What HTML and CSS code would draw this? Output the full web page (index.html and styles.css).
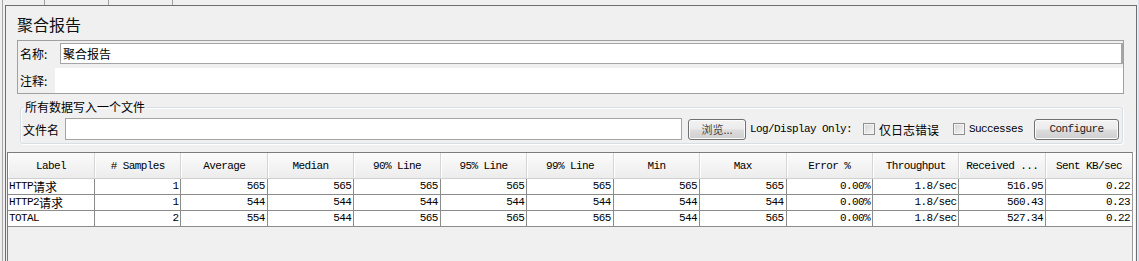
FILE: index.html
```html
<!DOCTYPE html>
<html lang="zh-CN">
  <head>
    <meta charset="UTF-8" />
    <title>聚合报告</title>
    <link rel="stylesheet" href="styles.css">
  </head>
  <body>
    <div class="window">
      <div class="tabs">
        <span class="tab tab_1"></span>
        <span class="tab tab_2"></span>
        <span class="tab tab_3"></span>
      </div>
      <div class="frame">
        <div class="top">
          <h1 class="title">聚合报告</h1>
          <div class="namebox">
            <div class="name_row">
              <span class="field_label name_label">名称:</span>
              <div class="text_input name_input">聚合报告</div>
            </div>
            <div class="comment_row">
              <span class="field_label comment_label">注释:</span>
              <div class="comment_area"></div>
            </div>
          </div>
          <fieldset class="filebox">
            <legend>所有数据写入一个文件</legend>
            <div class="file_row">
              <span class="file_label">文件名</span>
              <div class="text_input file_input"></div>
              <button class="btn browse">浏览...</button>
              <span class="mono log_label">Log/Display Only:</span>
              <span class="check first"></span>
              <span class="check_text cjk_text">仅日志错误</span>
              <span class="check second"></span>
              <span class="check_text mono">Successes</span>
              <button class="btn mono configure">Configure</button>
            </div>
          </fieldset>
        </div>
        <div class="table_wrap">
          <table class="results">
            <thead>
              <tr>
                <th>Label</th>
                <th># Samples</th>
                <th>Average</th>
                <th>Median</th>
                <th>90% Line</th>
                <th>95% Line</th>
                <th>99% Line</th>
                <th>Min</th>
                <th>Max</th>
                <th>Error %</th>
                <th>Throughput</th>
                <th>Received ...</th>
                <th>Sent KB/sec</th>
              </tr>
            </thead>
            <tbody>
              <tr>
                <td class="label">HTTP<span class="cjk">请求</span></td>
                <td>1</td><td>565</td><td>565</td><td>565</td><td>565</td><td>565</td>
                <td>565</td><td>565</td><td>0.00%</td><td>1.8/sec</td><td>516.95</td><td>0.22</td>
              </tr>
              <tr>
                <td class="label">HTTP2<span class="cjk">请求</span></td>
                <td>1</td><td>544</td><td>544</td><td>544</td><td>544</td><td>544</td>
                <td>544</td><td>544</td><td>0.00%</td><td>1.8/sec</td><td>560.43</td><td>0.23</td>
              </tr>
              <tr>
                <td class="label">TOTAL</td>
                <td>2</td><td>554</td><td>544</td><td>565</td><td>565</td><td>565</td>
                <td>544</td><td>565</td><td>0.00%</td><td>1.8/sec</td><td>527.34</td><td>0.22</td>
              </tr>
            </tbody>
          </table>
        </div>
      </div>
    </div>
  </body>
</html>
```

FILE: styles.css
```css
html, body {
  margin: 0;
  padding: 0;
}

body {
  width: 1139px;
  height: 261px;
  overflow: hidden;
  background-color: #f0f0f0;
  color: #000;
  font-family: "Noto Sans CJK SC", "Liberation Sans", sans-serif;
  font-size: 12px;
}

.mono {
  font-family: "Liberation Mono", "Noto Sans CJK SC", monospace;
  font-size: 11px;
  letter-spacing: -0.6px;
}

.window {
  margin-left: 2px;
  width: 1135px;
  height: 261px;
  border-left: 1px solid #a7a7a7;
  border-right: 1px solid #d3e0ef;
  display: flex;
  flex-direction: column;
}

.tabs {
  height: 5px;
  display: flex;
  flex-shrink: 0;
}

.tab {
  height: 5px;
  border-right: 1px solid #a0a0a0;
}

.tab_1 { width: 41px; }
.tab_2 { width: 63px; }
.tab_3 { width: 63px; }

.frame {
  margin-left: 2px;
  width: 1132px;
  box-sizing: border-box;
  flex: 1;
  border-top: 1px solid #6e6e6e;
  border-left: 1px solid #6e6e6e;
  border-right: 1px solid #6e6e6e;
  display: flex;
  flex-direction: column;
  min-height: 0;
}

.top {
  padding: 7px 12px 0 11px;
}

.title {
  margin: 0;
  font-size: 16px;
  font-weight: normal;
  line-height: 22px;
  height: 22px;
  color: #111;
}

.namebox {
  margin-top: 5px;
  border: 1px solid #a0a0a0;
  padding-top: 2px;
}

.name_row {
  display: flex;
  align-items: center;
  height: 21px;
}

.field_label {
  flex-shrink: 0;
  padding-left: 2px;
  line-height: 14px;
  white-space: nowrap;
}

.name_label {
  width: 40px;
}

.text_input {
  box-sizing: border-box;
  background: #fff;
  border: 1px solid #a5a5a5;
  line-height: 19px;
  padding-left: 2px;
}

.name_input {
  flex: 1;
  height: 21px;
  border-right-width: 2px;
}

.comment_row {
  margin-top: 4px;
  display: flex;
  align-items: center;
  height: 25px;
}

.comment_label {
  width: 35px;
}

.comment_area {
  flex: 1;
  height: 25px;
  background: #fff;
}

.filebox {
  margin: 6px 1px 0 3px;
  padding: 4px 4px 3px 1px;
  border: 1px solid #d5dfe5;
  border-radius: 3px;
  box-shadow: inset 1px 1px 0 #fff, 1px 1px 0 #fff;
  min-width: 0;
}

.filebox legend {
  margin-left: 2px;
  padding: 0 1px;
  font-size: 12px;
  line-height: 14px;
}

.file_row {
  display: flex;
  align-items: center;
  height: 22px;
}

.file_row > * {
  flex-shrink: 0;
}

.file_label {
  width: 36px;
  margin-left: 1px;
  white-space: nowrap;
}

.file_input {
  margin-left: 6px;
  width: 617px;
  height: 22px;
}

.btn {
  box-sizing: border-box;
  height: 21px;
  padding: 0;
  border: 1px solid #707070;
  border-radius: 3px;
  background: linear-gradient(#f2f2f2 0%, #ebebeb 48%, #dddddd 52%, #cfcfcf 100%);
  box-shadow: inset 0 0 0 1px #fbfbfb;
  color: #222;
  cursor: pointer;
}

.browse {
  margin-left: 6px;
  width: 58px;
  font-family: "Noto Sans CJK SC", sans-serif;
  font-size: 11px;
  color: #444;
}

.log_label {
  margin-left: 4px;
  width: 102px;
  white-space: nowrap;
}

.check {
  box-sizing: border-box;
  width: 12px;
  height: 12px;
  border: 1px solid #8e8f8f;
  background: linear-gradient(135deg, #d3d3d3, #f7f7f7);
  box-shadow: inset 0 0 0 1px #f4f4f4;
}

.check.first {
  margin-left: 11px;
}

.check.second {
  margin-left: 14px;
}

.check_text {
  margin-left: 4px;
  white-space: nowrap;
}

.configure {
  margin-left: 11px;
  width: 85px;
}

.table_wrap {
  margin: 8px 3px 0 1px;
  flex: 1;
  border-top: 1px solid #7c7c7c;
  border-left: 1px solid #7c7c7c;
  border-right: 1px solid #9a9a9a;
  box-shadow: 2px 0 0 #fff;
}

.results {
  width: 100%;
  table-layout: fixed;
  border-collapse: collapse;
  font-family: "Liberation Mono", monospace;
  font-size: 11px;
  letter-spacing: -0.6px;
}

.results th {
  height: 25px;
  padding: 0;
  font-weight: normal;
  text-align: center;
  background: linear-gradient(#fbfbfb, #f3f3f3 55%, #ececec);
  border-right: 1px solid #d5d5d5;
  box-shadow: inset 1px 0 0 #fff;
  border-bottom: 1px solid #d0d0d0;
  white-space: nowrap;
}

.results td {
  height: 15px;
  padding: 0 2px 0 1px;
  line-height: 15px;
  text-align: right;
  background: #fff;
  border-right: 1px solid #8c8c8c;
  border-bottom: 1px solid #8c8c8c;
  white-space: nowrap;
  overflow: hidden;
}

.results th:last-child,
.results td:last-child {
  border-right: none;
}

.results td.label {
  text-align: left;
}

.cjk {
  font-family: "Noto Sans CJK SC", sans-serif;
  font-size: 12px;
  line-height: 15px;
  letter-spacing: 0;
  vertical-align: top;
}
```
